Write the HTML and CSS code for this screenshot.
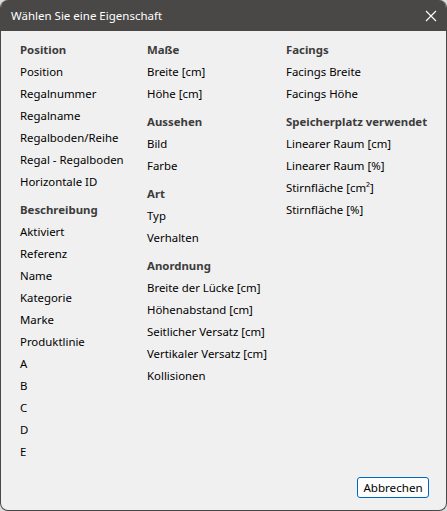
FILE: index.html
```html
<!DOCTYPE html>
<html lang="de">
<head>
<meta charset="utf-8">
<title>Wählen Sie eine Eigenschaft</title>
<link rel="stylesheet" href="styles.css">
</head>
<body>
<div class="window">
  <div class="titlebar">
    <span class="title">Wählen Sie eine Eigenschaft</span>
    <svg class="close" width="12" height="12" viewBox="0 0 12 12"><path d="M1 1 L11 11 M11 1 L1 11" stroke="#ffffff" stroke-width="1.1" fill="none"/></svg>
  </div>
  <div class="content">
    <div class="columns">
      <div class="col c1">
        <div class="group">
          <div class="head">Position</div>
          <div class="item">Position</div>
          <div class="item">Regalnummer</div>
          <div class="item">Regalname</div>
          <div class="item">Regalboden/Reihe</div>
          <div class="item">Regal - Regalboden</div>
          <div class="item">Horizontale ID</div>
        </div>
        <div class="group">
          <div class="head">Beschreibung</div>
          <div class="item">Aktiviert</div>
          <div class="item">Referenz</div>
          <div class="item">Name</div>
          <div class="item">Kategorie</div>
          <div class="item">Marke</div>
          <div class="item">Produktlinie</div>
          <div class="item">A</div>
          <div class="item">B</div>
          <div class="item">C</div>
          <div class="item">D</div>
          <div class="item">E</div>
        </div>
      </div>
      <div class="col c2">
        <div class="group">
          <div class="head">Maße</div>
          <div class="item">Breite [cm]</div>
          <div class="item">Höhe [cm]</div>
        </div>
        <div class="group">
          <div class="head">Aussehen</div>
          <div class="item">Bild</div>
          <div class="item">Farbe</div>
        </div>
        <div class="group">
          <div class="head">Art</div>
          <div class="item">Typ</div>
          <div class="item">Verhalten</div>
        </div>
        <div class="group">
          <div class="head">Anordnung</div>
          <div class="item">Breite der Lücke [cm]</div>
          <div class="item">Höhenabstand [cm]</div>
          <div class="item">Seitlicher Versatz [cm]</div>
          <div class="item">Vertikaler Versatz [cm]</div>
          <div class="item">Kollisionen</div>
        </div>
      </div>
      <div class="col c3">
        <div class="group">
          <div class="head">Facings</div>
          <div class="item">Facings Breite</div>
          <div class="item">Facings Höhe</div>
        </div>
        <div class="group">
          <div class="head">Speicherplatz verwendet</div>
          <div class="item">Linearer Raum [cm]</div>
          <div class="item">Linearer Raum [%]</div>
          <div class="item">Stirnfläche [cm²]</div>
          <div class="item">Stirnfläche [%]</div>
        </div>
      </div>
    </div>
    <div class="footer">
      <button class="btn">Abbrechen</button>
    </div>
  </div>
</div>
</body>
</html>
```
FILE: styles.css
```css
html, body {
  margin: 0;
  padding: 0;
  background: #dcdcdc;
}
body {
  font-family: "Noto Sans", "Open Sans", sans-serif;
  font-size: 11.4px;
  color: #000;
}
.window {
  width: 447px;
  height: 511px;
  box-sizing: border-box;
  display: flex;
  flex-direction: column;
  background: #f0f0f0;
  border: 1px solid #4a4846;
  border-top: none;
  border-radius: 8px;
  overflow: hidden;
}
.titlebar {
  height: 31px;
  flex: none;
  background: #4a4846;
  display: flex;
  align-items: center;
  justify-content: space-between;
  padding: 0 9px 0 10px;
  color: #ffffff;
  font-size: 11.5px;
}
.title {
  padding-bottom: 1px;
}
.close {
  display: block;
}
.content {
  flex: 1;
  display: flex;
  flex-direction: column;
  padding: 8px 17px 12px 19px;
}
.columns {
  flex: 1;
  display: grid;
  grid-template-columns: 127px 139px 1fr;
}
.group + .group {
  margin-top: 6px;
}
.head, .item {
  height: 22px;
  line-height: 22px;
  white-space: nowrap;
}
.head {
  font-weight: 700;
  color: #3c3c3c;
}
.footer {
  display: flex;
  justify-content: flex-end;
}
.btn {
  font-family: inherit;
  font-size: 11.6px;
  color: #000;
  background: #fdfdfd;
  border: 1px solid #0067c0;
  border-radius: 3px;
  width: 72px;
  height: 21px;
  padding: 0;
  line-height: 18px;
}
```
